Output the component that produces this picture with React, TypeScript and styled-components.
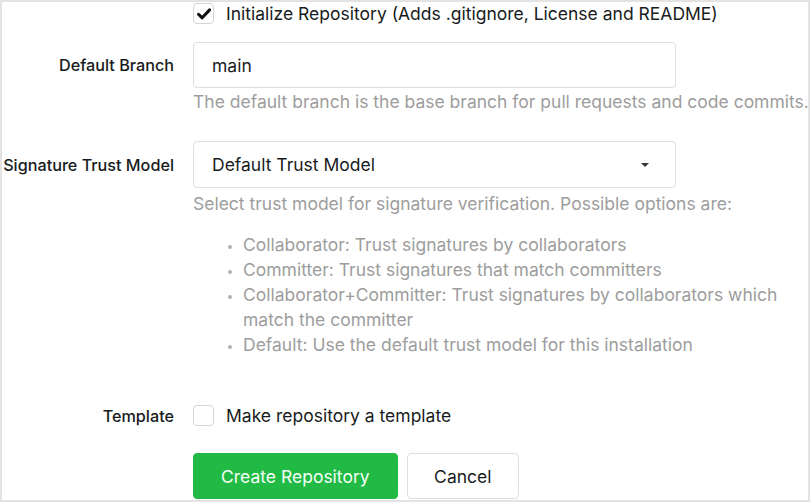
import styled, { createGlobalStyle } from 'styled-components'

const GlobalStyle = createGlobalStyle`
  html, body {
    margin: 0;
    padding: 0;
    background: #ffffff;
  }
  body {
    font-family: Inter, 'Noto Sans', sans-serif;
    color: #181c21;
  }
`

const Frame = styled.div`
  box-sizing: border-box;
  width: 810px;
  height: 502px;
  border: 2px solid #e3e3e3;
  background: #ffffff;
  overflow: hidden;
`

const Form = styled.div`
  display: flex;
  flex-direction: column;
`

const Field = styled.div<{ $top?: number; $center?: boolean }>`
  display: grid;
  grid-template-columns: 172px 1fr;
  column-gap: 19px;
  align-items: ${(p) => (p.$center ? 'center' : 'start')};
  margin-top: ${(p) => p.$top ?? 0}px;
`

const Label = styled.label<{ $offset?: number }>`
  text-align: right;
  font-size: 16.2px;
  font-weight: 500;
  line-height: 20px;
  white-space: nowrap;
  padding-top: ${(p) => p.$offset ?? 0}px;
`

const Control = styled.div`
  display: flex;
  flex-direction: column;
  min-width: 0;
`

const CheckRow = styled.div`
  display: flex;
  align-items: center;
  gap: 12px;
  font-size: 17.5px;
  line-height: 20px;
  white-space: nowrap;
`

const Box = styled.span`
  box-sizing: border-box;
  display: inline-flex;
  align-items: center;
  justify-content: center;
  width: 21px;
  height: 21px;
  border: 1px solid #d4d4d5;
  border-radius: 4px;
  background: #fff;
`

const Input = styled.div<{ $h?: number }>`
  box-sizing: border-box;
  width: 483px;
  height: ${(p) => p.$h ?? 46}px;
  border: 1px solid #dedede;
  border-radius: 4px;
  display: flex;
  align-items: center;
  justify-content: space-between;
  padding: 0 26px 0 18px;
  font-size: 17.5px;
  color: #181c21;
`

const Caret = styled.span`
  width: 0;
  height: 0;
  border-left: 4px solid transparent;
  border-right: 4px solid transparent;
  border-top: 4px solid #333;
`

const Help = styled.div<{ $top?: number }>`
  margin-top: ${(p) => p.$top ?? 1}px;
  font-size: 17.5px;
  line-height: 25px;
  color: #9d9d9d;
  white-space: nowrap;
`

const List = styled.ul`
  margin: 16px 0 0;
  padding: 0 0 0 50px;
  font-size: 17.5px;
  line-height: 25px;
  color: #9d9d9d;
  width: 550px;

  li::marker {
    color: #b3b3b3;
    font-size: 13px;
  }
`

const Actions = styled.div`
  display: flex;
  gap: 9px;
  margin-top: 27px;
  margin-left: 191px;
`

const Button = styled.button<{ $primary?: boolean }>`
  box-sizing: border-box;
  height: 46px;
  padding: 0 ${(p) => (p.$primary ? 27 : 26.5)}px;
  border-radius: 4px;
  font-family: Inter, 'Noto Sans', sans-serif;
  font-size: 17.5px;
  cursor: pointer;
  border: 1px solid ${(p) => (p.$primary ? '#21ba45' : '#dedede')};
  background: ${(p) => (p.$primary ? '#21ba45' : '#ffffff')};
  color: ${(p) => (p.$primary ? '#f4fff6' : '#181c21')};
`

function Check() {
  return (
    <svg width="14" height="12" viewBox="0 0 14 12">
      <path d="M1.6 6.4 L5.2 9.8 L12.6 1.9" fill="none" stroke="#111" strokeWidth="3" strokeLinecap="round" strokeLinejoin="round" />
    </svg>
  )
}

export default function App() {
  return (
    <>
      <GlobalStyle />
      <Frame>
        <Form>
          <Field $top={1}>
            <span />
            <CheckRow>
              <Box>
                <Check />
              </Box>
              Initialize Repository (Adds .gitignore, License and README)
            </CheckRow>
          </Field>

          <Field $top={18}>
            <Label $offset={13}>Default Branch</Label>
            <Control>
              <Input>main</Input>
              <Help>The default branch is the base branch for pull requests and code commits.</Help>
            </Control>
          </Field>

          <Field $top={27}>
            <Label $offset={14}>Signature Trust Model</Label>
            <Control>
              <Input $h={47}>
                Default Trust Model
                <Caret />
              </Input>
              <Help $top={3}>Select trust model for signature verification. Possible options are:</Help>
              <List>
                <li>Collaborator: Trust signatures by collaborators</li>
                <li>Committer: Trust signatures that match committers</li>
                <li>Collaborator+Committer: Trust signatures by collaborators which match the committer</li>
                <li>Default: Use the default trust model for this installation</li>
              </List>
            </Control>
          </Field>

          <Field $top={48} $center>
            <Label>Template</Label>
            <CheckRow>
              <Box />
              Make repository a template
            </CheckRow>
          </Field>

          <Actions>
            <Button $primary>Create Repository</Button>
            <Button>Cancel</Button>
          </Actions>
        </Form>
      </Frame>
    </>
  )
}
